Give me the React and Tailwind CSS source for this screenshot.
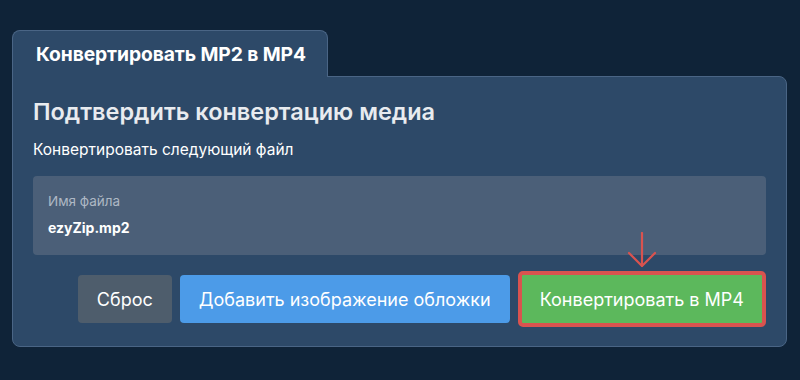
import React from "react";

const font = { fontFamily: "Inter, 'Noto Sans', sans-serif" };

function DownArrow() {
  return (
    <svg
      width="30"
      height="36"
      viewBox="0 0 30 36"
      fill="none"
      stroke="#d9534f"
      strokeWidth="2.2"
      strokeLinecap="round"
      strokeLinejoin="round"
    >
      <path d="M15 1 L15 34" />
      <path d="M2 21 L15 34 L28 21" />
    </svg>
  );
}

export default function App() {
  return (
    <div className="w-[800px] h-[380px] bg-[#0f2338] pt-[30px] pl-[12px]" style={font}>
      <div className="w-[775px]">
        {/* Tab */}
        <div className="relative z-10 -mb-px w-[316px] h-[47px] flex items-center pl-[23px] bg-[#2d4968] border border-b-0 border-[#4a6585] rounded-t-[8px]">
          <span className="text-white font-bold text-[19.3px] tracking-[-0.1px]">
            Конвертировать MP2 в MP4
          </span>
        </div>

        {/* Panel */}
        <div className="bg-[#2d4968] border border-[#4a6585] rounded-b-[8px] rounded-tr-[8px] px-[20px] pt-[20px] pb-[19px]">
          <h1 className="text-[23.5px] leading-[29px] font-semibold text-[#e8ebef]">
            Подтвердить конвертацию медиа
          </h1>
          <p className="mt-[13px] text-[15.5px] leading-[21px] text-white">
            Конвертировать следующий файл
          </p>

          <div className="mt-[16px] h-[79px] rounded-[4px] bg-[#4b5f78] px-[15px] pt-[16px]">
            <div className="text-[13.5px] leading-[19px] text-[#aeb8c4]">Имя файла</div>
            <div className="mt-[6px] text-[14px] leading-[22px] font-bold text-white">
              ezyZip.mp2
            </div>
          </div>

          <div className="mt-[16px] flex items-center justify-end gap-[8px]">
            <button className="h-[48px] px-[19px] rounded-[4px] bg-[#4e5d6c] text-white text-[18px]">
              Сброс
            </button>
            <button className="h-[48px] px-[19px] rounded-[4px] bg-[#4c9be8] text-white text-[18px]">
              Добавить изображение обложки
            </button>
            <div className="relative">
              <div className="absolute left-1/2 -translate-x-1/2 -top-[39px]">
                <DownArrow />
              </div>
              <button className="h-[56px] px-[18px] rounded-[5px] border-[4px] border-[#d9534f] bg-[#5cb85c] text-white text-[18px]">
                Конвертировать в MP4
              </button>
            </div>
          </div>
        </div>
      </div>
    </div>
  );
}
